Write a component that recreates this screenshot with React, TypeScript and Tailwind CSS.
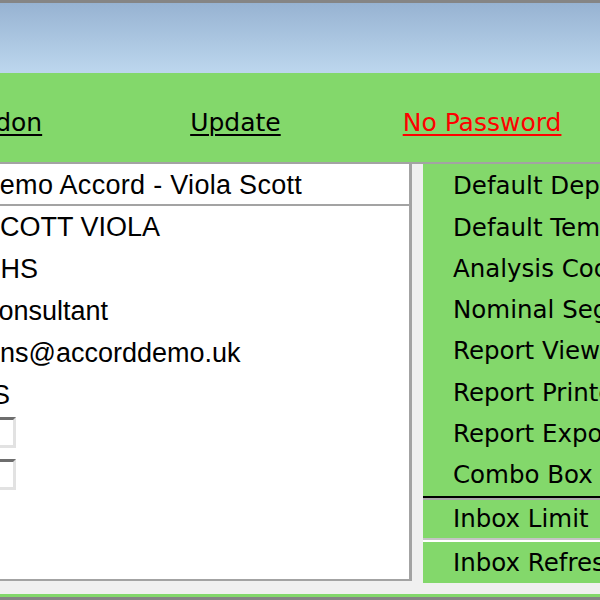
const valueRows = [
  { text: "SCOTT VIOLA", offset: "ml-[-18px]" },
  { text: "NHS", offset: "ml-[-19px]" },
  { text: "Consultant", offset: "ml-[-21px]" },
  { text: "ns@accorddemo.uk", offset: "ml-0" },
  { text: "S", offset: "ml-[-8px]" },
];

const settings = [
  "Default Department",
  "Default Template",
  "Analysis Code",
  "Nominal Segment",
  "Report Viewer",
  "Report Printer",
  "Report Export",
  "Combo Box Size",
];

function CheckBox() {
  return (
    <div className="h-[42px] flex items-start">
      <div className="mt-[1px] ml-[-14px] w-[30px] h-[31px] bg-white border-t-[3px] border-t-[#6e6e6e] border-r-[3px] border-b-[3px] border-r-[#e2e2e2] border-b-[#e2e2e2]" />
    </div>
  );
}

export default function App() {
  return (
    <div className="w-[600px] h-[600px] overflow-hidden bg-[#f0f0f0] flex flex-col">
      {/* window title strip */}
      <div className="h-[3px] bg-[#858585]" />
      <div className="h-[70px] bg-gradient-to-b from-[#97b3d2] to-[#bdd7ee]" />

      {/* action links */}
      <div
        className="h-[89px] bg-[#83d86b] flex items-start pt-[37px] text-[25px] leading-[25px] whitespace-nowrap"
        style={{ fontFamily: '"DejaVu Sans", Verdana, sans-serif' }}
      >
        <a className="ml-[-69px] text-black underline decoration-2 underline-offset-[3px]">Abandon</a>
        <a className="ml-[148px] text-black underline decoration-2 underline-offset-[3px]">Update</a>
        <a className="ml-[122px] text-[#ff0000] underline decoration-2 underline-offset-[3px]">No Password</a>
      </div>
      <div className="h-[2px] bg-[#a3a3a3]" />

      {/* body */}
      <div className="h-[430px] flex">
        <div className="w-[412px] h-[417px] bg-white border-r-[3px] border-b-[2px] border-[#a3a3a3] flex flex-col overflow-hidden">
          <div
            className="flex flex-col text-[27px] text-black whitespace-nowrap"
            style={{ fontFamily: '"Liberation Sans", Arial, sans-serif' }}
          >
            <div className="h-[40px] flex items-center pt-[2px]">
              <span className="ml-[-20px] tracking-[0.3px]">Demo Accord - Viola Scott</span>
            </div>
            <div className="h-[2px] bg-[#a3a3a3]" />
            {valueRows.map((row) => (
              <div key={row.text} className="h-[42px] flex items-center">
                <span className={row.offset}>{row.text}</span>
              </div>
            ))}
            <CheckBox />
            <CheckBox />
          </div>
        </div>

        <div className="w-[11px]" />

        <div
          className="flex-1 flex flex-col text-[24.5px] text-black whitespace-nowrap overflow-hidden"
          style={{ fontFamily: '"DejaVu Sans", Verdana, sans-serif' }}
        >
          <div className="bg-[#83d86b] flex flex-col pt-[2px]">
            {settings.map((s) => (
              <div key={s} className="h-[41.3px] flex items-center pl-[30px]">
                {s}
              </div>
            ))}
          </div>
          <div className="h-[2px] bg-black" />
          <div className="h-[2px] bg-[#a8a8a8]" />
          <div className="h-[38px] bg-[#83d86b] flex items-center pl-[30px]">Inbox Limit</div>
          <div className="h-[2px] bg-[#c4c4c4]" />
          <div className="h-[2px] bg-white" />
          <div className="h-[41px] bg-[#83d86b] flex items-center pl-[30px]">Inbox Refresh</div>
        </div>
      </div>

      <div className="h-[3px] bg-[#83d86b]" />
      <div className="h-[3px] bg-[#858585]" />
    </div>
  );
}
